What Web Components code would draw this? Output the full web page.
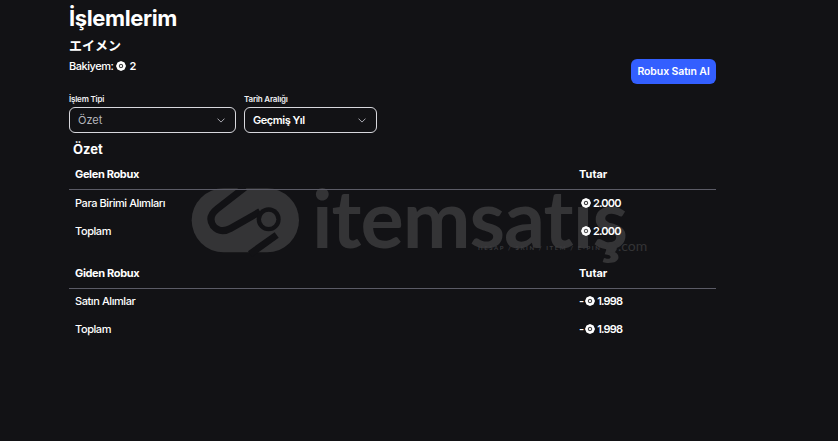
<!DOCTYPE html>
<html lang="tr">
<head>
<meta charset="utf-8">
<title>İşlemlerim</title>
<style>
  html, body { margin: 0; height: 100%; background: #121215; }
  body { font-family: Inter, "Noto Sans CJK JP", sans-serif; color: #fff; overflow: hidden; }
</style>
</head>
<body>
<transactions-page>
  <robux-table heading="Gelen Robux">
    <robux-row label="Para Birimi Alımları" amount="2.000"></robux-row>
    <robux-row label="Toplam" amount="2.000"></robux-row>
  </robux-table>
  <robux-table heading="Giden Robux" class="second">
    <robux-row label="Satın Alımlar" amount="1.998" negative></robux-row>
    <robux-row label="Toplam" amount="1.998" negative></robux-row>
  </robux-table>
</transactions-page>
<site-watermark></site-watermark>

<script>
const ROBUX_ICON = `
  <svg class="rbx" width="10" height="10" viewBox="0 0 20 20" aria-hidden="true">
    <path fill="#fff" fill-rule="evenodd" d="M10 0l7 3 3 7-3 7-7 3-7-3-3-7 3-7zM10 5.5L6.8 6.8 5.5 10l1.3 3.2L10 14.5l3.2-1.3 1.3-3.2-1.3-3.2z"/>
    <rect x="7.6" y="7.6" width="4.8" height="4.8" fill="#e8e8e8"/>
  </svg>`;

class RobuxAmount extends HTMLElement {
  connectedCallback() {
    this.attachShadow({ mode: 'open' });
    const negative = this.hasAttribute('negative');
    this.shadowRoot.innerHTML = `
      <style>
        :host { display: inline-flex; align-items: center; font-weight: 600; letter-spacing: -0.85px; }
        .minus { margin-right: 2px; }
        svg { margin-right: 2px; display: block; }
      </style>
      ${negative ? '<span class="minus">-</span>' : ''}${ROBUX_ICON}<span><slot></slot></span>
    `;
  }
}

class RobuxRow extends HTMLElement {
  connectedCallback() {
    this.attachShadow({ mode: 'open' });
    const neg = this.hasAttribute('negative') ? 'negative' : '';
    this.shadowRoot.innerHTML = `
      <style>
        :host { display: grid; grid-template-columns: 504px 1fr; height: 28px; align-items: center; padding-left: 6px; font-size: 11px; font-weight: 500; }
        .name { letter-spacing: -0.42px; }
        .amount { margin-left: ${neg ? '0' : '2px'}; }
      </style>
      <div class="name">${this.getAttribute('label')}</div>
      <div class="amount"><robux-amount ${neg}>${this.getAttribute('amount')}</robux-amount></div>
    `;
  }
}

class RobuxTable extends HTMLElement {
  connectedCallback() {
    this.attachShadow({ mode: 'open' });
    this.shadowRoot.innerHTML = `
      <style>
        :host { display: block; position: relative; z-index: 1; }
        :host(.second) { margin-top: 12px; }
        .rows { margin-top: -1px; }
        :host(.second) .rows { margin-top: -2px; }
        .head { display: grid; grid-template-columns: 504px 1fr; height: 31px; align-items: center; padding-left: 6px; font-size: 11px; font-weight: 700; border-bottom: 1px solid #5b5b66; }
        .head span:first-child { letter-spacing: -0.35px; }
      </style>
      <div class="head"><span>${this.getAttribute('heading')}</span><span>Tutar</span></div>
      <div class="rows"><slot></slot></div>
    `;
  }
}

class FilterSelect extends HTMLElement {
  connectedCallback() {
    this.attachShadow({ mode: 'open' });
    const muted = this.hasAttribute('muted');
    this.shadowRoot.innerHTML = `
      <style>
        :host { display: block; width: var(--w); }
        label { display: block; font-size: 8px; font-weight: 600; line-height: 10px; margin-bottom: 3px; color: #f0f0f3; letter-spacing: -0.2px; }
        .box { box-sizing: border-box; height: 26px; border: 1px solid #d8d8dd; border-radius: 6px; display: flex; align-items: center; justify-content: space-between; padding: 0 10px 0 8px; font-size: 11px; font-weight: ${muted ? 400 : 600}; color: ${muted ? '#b5b5bc' : '#fff'}; letter-spacing: ${muted ? 0 : '-0.45px'}; }
        svg { display: block; }
      </style>
      <label>${this.getAttribute('label')}</label>
      <div class="box">
        <span><slot></slot></span>
        <svg width="8" height="5" viewBox="0 0 8 5" fill="none" stroke="#a9a9b0" stroke-width="1"><path d="M.5.6L4 4.1 7.5.6"/></svg>
      </div>
    `;
  }
}

class TransactionsPage extends HTMLElement {
  connectedCallback() {
    this.attachShadow({ mode: 'open' });
    this.shadowRoot.innerHTML = `
      <style>
        :host { display: block; width: 647px; margin-left: 69px; }
        h1 { margin: 0; padding-top: 5px; font-size: 22px; line-height: 27px; font-weight: 700; letter-spacing: -0.4px; }
        h2 { margin: 5px 0 0; font-size: 13px; line-height: 17px; font-weight: 700; }
        .balance-row { display: flex; justify-content: space-between; align-items: flex-start; height: 33px; margin-top: 4px; }
        .balance { display: flex; align-items: center; gap: 3px; font-size: 11px; font-weight: 500; line-height: 14px; margin-top: 1px; letter-spacing: -0.45px; }
        .balance svg { display: block; }
        .buy { box-sizing: border-box; width: 85px; height: 25px; margin-top: 1px; display: flex; align-items: center; justify-content: center; background: #335fff; border-radius: 6px; font-size: 10.5px; font-weight: 600; letter-spacing: -0.1px; white-space: nowrap; }
        .filters { display: flex; gap: 8px; margin-top: 3px; }
        h3 { margin: 8px 0 0 4px; font-size: 13px; line-height: 17px; font-weight: 700; }
      </style>
      <h1>İşlemlerim</h1>
      <h2>エイメン</h2>
      <div class="balance-row">
        <div class="balance"><span>Bakiyem:</span>${ROBUX_ICON}<span style="font-weight:600">2</span></div>
        <div class="buy">Robux Satın Al</div>
      </div>
      <div class="filters">
        <filter-select label="İşlem Tipi" muted style="--w:167px">Özet</filter-select>
        <filter-select label="Tarih Aralığı" style="--w:133px">Geçmiş Yıl</filter-select>
      </div>
      <h3>Özet</h3>
      <slot></slot>
    `;
  }
}

class SiteWatermark extends HTMLElement {
  connectedCallback() {
    this.attachShadow({ mode: 'open' });
    this.shadowRoot.innerHTML = `
      <style>
        :host { position: absolute; left: 0; top: 0; width: 838px; height: 441px; pointer-events: none; color: #343436; font-family: Lato, Inter, sans-serif; }
        svg { position: absolute; left: 185px; top: 180px; }
        .name { position: absolute; left: 312px; top: 172px; font-size: 81px; line-height: 90px; font-weight: 700; letter-spacing: -1px; white-space: nowrap; }
        .dot { position: absolute; left: 606px; top: 242px; width: 11px; height: 11px; border-radius: 50%; background: #343436; }
        .tag { position: absolute; left: 478px; top: 244px; font-size: 6px; line-height: 8px; font-weight: 700; letter-spacing: 1.6px; white-space: nowrap; color: #3a3a3d; }
        .com { position: absolute; left: 618px; top: 238px; font-size: 14px; line-height: 16px; font-weight: 400; color: #343436; }
      </style>
      <svg width="125" height="80" viewBox="0 0 375 240" aria-hidden="true">
        <rect x="20" y="25" width="322" height="192" rx="96" fill="#343436"/>
        <g fill="none" stroke="#121215" stroke-width="21" stroke-linecap="butt">
          <path d="M180 22L97 86Q66 110 85 138Q106 162 137 145L225 95"/>
          <path d="M195 222L275 165"/>
        </g>
        <circle cx="251" cy="118" r="36" fill="#121215"/>
        <circle cx="251" cy="118" r="23" fill="#343436"/>
      </svg>
      <div class="name">itemsatış</div>
      <div class="dot"></div>
      <div class="tag">HESAP / SKIN / ITEM / E-PIN</div>
      <div class="com">.com</div>
    `;
  }
}

customElements.define('robux-amount', RobuxAmount);
customElements.define('robux-row', RobuxRow);
customElements.define('robux-table', RobuxTable);
customElements.define('filter-select', FilterSelect);
customElements.define('transactions-page', TransactionsPage);
customElements.define('site-watermark', SiteWatermark);
</script>
</body>
</html>
